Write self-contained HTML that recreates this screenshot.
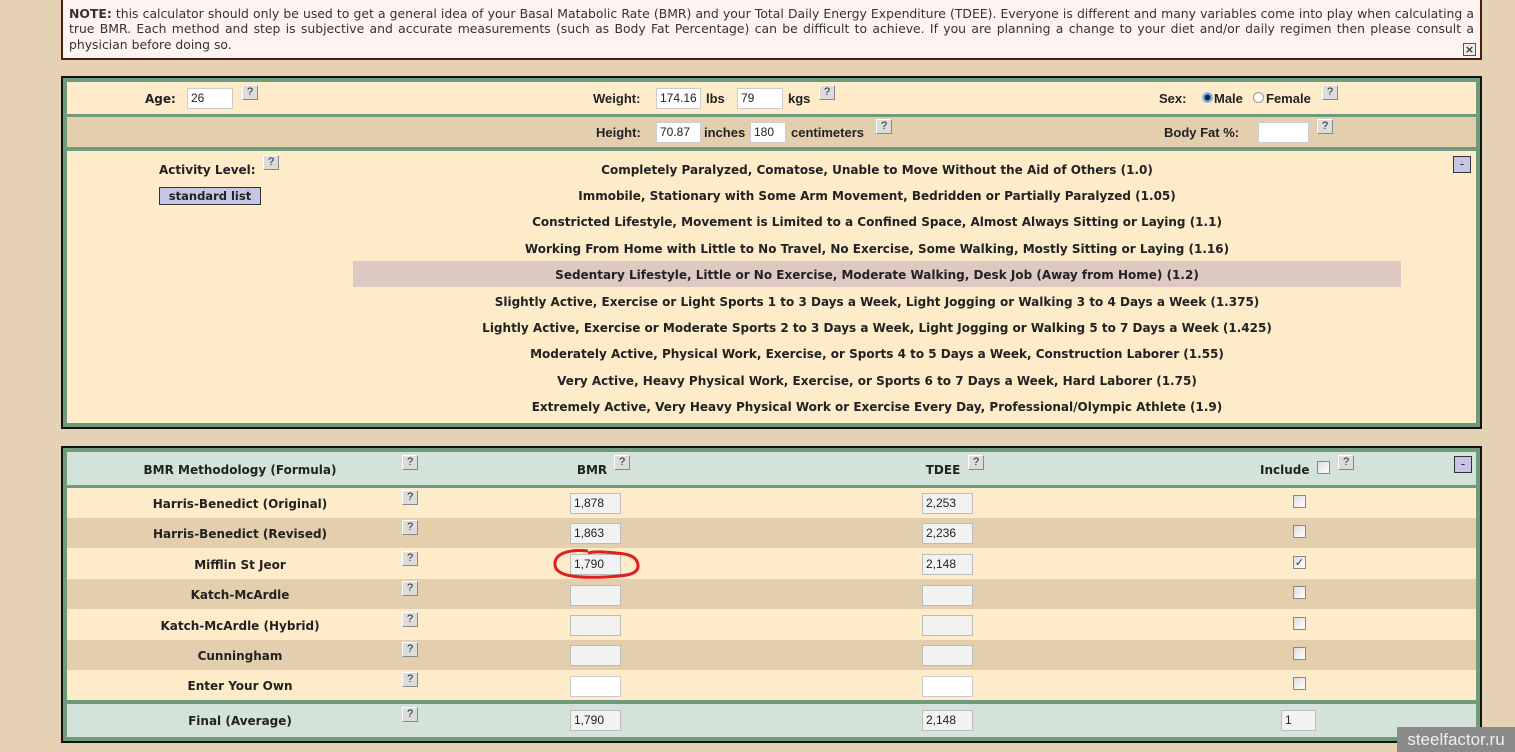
<!DOCTYPE html>
<html><head><meta charset="utf-8"><style>
*{box-sizing:border-box;margin:0;padding:0}
body{width:1515px;height:752px;background:#e5d2b5;position:relative;overflow:hidden;font-family:"DejaVu Sans",Verdana,sans-serif;font-size:12px;color:#222}
.a{position:absolute}
.note{left:61px;top:0;width:1421px;height:60px;border:2px solid #4a1c1c;border-top:none;background:#fdf4f2;padding:6px 6px;font-size:12.4px;line-height:15.3px;text-align:justify;color:#333}
.x{position:absolute;right:4px;bottom:2px;width:13px;height:13px;border:1px solid #555;background:#eee;font-size:11px;line-height:11px;text-align:center;font-weight:bold}
.panel{left:61px;width:1421px;border:2px solid #111;background:#6f9b7c;padding:4px}
.l{background:#fdebca}.d{background:#e3cfae}.g{background:#d3e3da}
b,.b{font-weight:bold}
.q{position:absolute;width:16px;height:15px;background:#dcdcdc;border:1px solid #888;border-top-color:#fff;border-left-color:#fff;font-size:11px;line-height:13px;text-align:center;font-family:"Liberation Sans",sans-serif;color:#222}
.in{position:absolute;height:21px;background:#fff;border:1px solid #ccc;font-family:"Liberation Sans",sans-serif;font-size:12px;line-height:19px;padding-left:3px}
.ro{background:#f2f2f2;border-color:#bbb}
.t{position:absolute;font-weight:bold;white-space:nowrap;font-size:12px}
.c{transform:translateX(-50%)}
.cb{position:absolute;width:13px;height:13px;border:1px solid #888;background:linear-gradient(135deg,#ddd,#fff)}
.act{position:absolute;left:0;width:100%;text-align:center;font-weight:bold;font-size:12px}
.min{position:absolute;width:18px;height:17px;background:#c8c4e6;border:1px solid #333;text-align:center;line-height:14px;font-size:12px}
.lc{font-family:"Liberation Sans",sans-serif;font-weight:bold;font-size:13px}
</style></head><body>
<div class="a note"><b>NOTE:</b> this calculator should only be used to get a general idea of your Basal Matabolic Rate (BMR) and your Total Daily Energy Expenditure (TDEE). Everyone is different and many variables come into play when calculating a true BMR. Each method and step is subjective and accurate measurements (such as Body Fat Percentage) can be difficult to achieve. If you are planning a change to your diet and/or daily regimen then please consult a physician before doing so.<div class="x">×</div></div>

<div class="a panel" style="top:76px;height:353px"></div>
<div class="a" style="left:67px;top:82px;width:1409px;height:32px;background:#fdebca"></div>
<div class="a" style="left:67px;top:117px;width:1409px;height:30px;background:#e3cfae"></div>
<div class="a" style="left:67px;top:151px;width:1409px;height:272px;background:#fdebca"></div>

<div class="t" style="left:145px;top:92px">Age:</div>
<div class="in" style="left:187px;top:88px;width:46px">26</div>
<div class="q" style="left:242px;top:85px">?</div>
<div class="t lc" style="left:593px;top:91px">Weight:</div>
<div class="in" style="left:656px;top:88px;width:45px">174.16</div>
<div class="t lc" style="left:706px;top:91px">lbs</div>
<div class="in" style="left:737px;top:88px;width:46px">79</div>
<div class="t lc" style="left:788px;top:91px">kgs</div>
<div class="q" style="left:819px;top:85px">?</div>
<div class="t lc" style="left:1159px;top:91px">Sex:</div>
<div class="a" style="left:1202px;top:92px;width:11px;height:11px;border-radius:50%;background:radial-gradient(#124 30%,#5a9ae0 40%,#ccc 80%)"></div>
<div class="t lc" style="left:1214px;top:91px">Male</div>
<div class="a" style="left:1253px;top:92px;width:11px;height:11px;border-radius:50%;border:1px solid #999;background:#fff"></div>
<div class="t lc" style="left:1266px;top:91px">Female</div>
<div class="q" style="left:1322px;top:85px">?</div>

<div class="t lc" style="left:596px;top:125px">Height:</div>
<div class="in" style="left:656px;top:122px;width:45px">70.87</div>
<div class="t lc" style="left:704px;top:125px">inches</div>
<div class="in" style="left:750px;top:122px;width:36px">180</div>
<div class="t lc" style="left:791px;top:125px">centimeters</div>
<div class="q" style="left:876px;top:119px">?</div>
<div class="t lc" style="left:1164px;top:125px">Body Fat %:</div>
<div class="in" style="left:1258px;top:122px;width:51px"></div>
<div class="q" style="left:1317px;top:119px">?</div>

<div class="t" style="left:159px;top:163px">Activity Level:</div>
<div class="q" style="left:263px;top:155px">?</div>
<div class="a b" style="left:159px;top:187px;width:102px;height:18px;background:#c8c4e6;border:1px solid #333;text-align:center;font-size:11.5px;line-height:16px">standard list</div>
<div class="min" style="left:1453px;top:156px">-</div>
<div class="a" style="left:353px;top:261px;width:1048px;height:26px;background:#ddc9c1"></div>
<div class="a" style="left:353px;top:163px;width:1048px;height:260px">
<div class="act" style="top:0">Completely Paralyzed, Comatose, Unable to Move Without the Aid of Others (1.0)</div>
<div class="act" style="top:26px">Immobile, Stationary with Some Arm Movement, Bedridden or Partially Paralyzed (1.05)</div>
<div class="act" style="top:52px">Constricted Lifestyle, Movement is Limited to a Confined Space, Almost Always Sitting or Laying (1.1)</div>
<div class="act" style="top:79px">Working From Home with Little to No Travel, No Exercise, Some Walking, Mostly Sitting or Laying (1.16)</div>
<div class="act" style="top:105px">Sedentary Lifestyle, Little or No Exercise, Moderate Walking, Desk Job (Away from Home) (1.2)</div>
<div class="act" style="top:132px">Slightly Active, Exercise or Light Sports 1 to 3 Days a Week, Light Jogging or Walking 3 to 4 Days a Week (1.375)</div>
<div class="act" style="top:158px">Lightly Active, Exercise or Moderate Sports 2 to 3 Days a Week, Light Jogging or Walking 5 to 7 Days a Week (1.425)</div>
<div class="act" style="top:184px">Moderately Active, Physical Work, Exercise, or Sports 4 to 5 Days a Week, Construction Laborer (1.55)</div>
<div class="act" style="top:211px">Very Active, Heavy Physical Work, Exercise, or Sports 6 to 7 Days a Week, Hard Laborer (1.75)</div>
<div class="act" style="top:237px">Extremely Active, Very Heavy Physical Work or Exercise Every Day, Professional/Olympic Athlete (1.9)</div>
</div>

<div class="a panel" style="top:446px;height:297px"></div>
<div class="a g" style="left:67px;top:452px;width:1409px;height:33px"></div>
<div class="a l" style="left:67px;top:488px;width:1409px;height:30px"></div>
<div class="a d" style="left:67px;top:518px;width:1409px;height:30px"></div>
<div class="a l" style="left:67px;top:548px;width:1409px;height:31px"></div>
<div class="a d" style="left:67px;top:579px;width:1409px;height:30px"></div>
<div class="a l" style="left:67px;top:609px;width:1409px;height:31px"></div>
<div class="a d" style="left:67px;top:640px;width:1409px;height:30px"></div>
<div class="a l" style="left:67px;top:670px;width:1409px;height:30px"></div>
<div class="a g" style="left:67px;top:704px;width:1409px;height:33px"></div>

<div class="t c" style="left:240px;top:463px">BMR Methodology (Formula)</div>
<div class="q" style="left:402px;top:455px">?</div>
<div class="t c" style="left:592px;top:463px">BMR</div>
<div class="q" style="left:614px;top:455px">?</div>
<div class="t c" style="left:943px;top:463px">TDEE</div>
<div class="q" style="left:968px;top:455px">?</div>
<div class="t" style="left:1260px;top:463px">Include</div>
<div class="cb" style="left:1317px;top:461px"></div>
<div class="q" style="left:1338px;top:455px">?</div>
<div class="min" style="left:1454px;top:456px">-</div>

<div class="t c" style="left:240px;top:497px">Harris-Benedict (Original)</div>
<div class="t c" style="left:240px;top:527px">Harris-Benedict (Revised)</div>
<div class="t c" style="left:240px;top:558px">Mifflin St Jeor</div>
<div class="t c" style="left:240px;top:588px">Katch-McArdle</div>
<div class="t c" style="left:240px;top:619px">Katch-McArdle (Hybrid)</div>
<div class="t c" style="left:240px;top:649px">Cunningham</div>
<div class="t c" style="left:240px;top:679px">Enter Your Own</div>
<div class="t c" style="left:240px;top:714px">Final (Average)</div>

<div class="q" style="left:402px;top:490px">?</div>
<div class="q" style="left:402px;top:520px">?</div>
<div class="q" style="left:402px;top:551px">?</div>
<div class="q" style="left:402px;top:581px">?</div>
<div class="q" style="left:402px;top:612px">?</div>
<div class="q" style="left:402px;top:642px">?</div>
<div class="q" style="left:402px;top:672px">?</div>
<div class="q" style="left:402px;top:707px">?</div>

<div class="in ro" style="left:570px;top:493px;width:51px">1,878</div>
<div class="in ro" style="left:570px;top:523px;width:51px">1,863</div>
<div class="in ro" style="left:570px;top:554px;width:51px">1,790</div>
<div class="in ro" style="left:570px;top:585px;width:51px"></div>
<div class="in ro" style="left:570px;top:615px;width:51px"></div>
<div class="in ro" style="left:570px;top:645px;width:51px"></div>
<div class="in" style="left:570px;top:676px;width:51px"></div>
<div class="in ro" style="left:570px;top:710px;width:51px">1,790</div>

<div class="in ro" style="left:922px;top:493px;width:51px">2,253</div>
<div class="in ro" style="left:922px;top:523px;width:51px">2,236</div>
<div class="in ro" style="left:922px;top:554px;width:51px">2,148</div>
<div class="in ro" style="left:922px;top:585px;width:51px"></div>
<div class="in ro" style="left:922px;top:615px;width:51px"></div>
<div class="in ro" style="left:922px;top:645px;width:51px"></div>
<div class="in" style="left:922px;top:676px;width:51px"></div>
<div class="in ro" style="left:922px;top:710px;width:51px">2,148</div>

<div class="cb" style="left:1293px;top:495px"></div>
<div class="cb" style="left:1293px;top:525px"></div>
<div class="cb" style="left:1293px;top:556px;font-size:11px;line-height:11px;text-align:center;color:#335">✓</div>
<div class="cb" style="left:1293px;top:586px"></div>
<div class="cb" style="left:1293px;top:617px"></div>
<div class="cb" style="left:1293px;top:647px"></div>
<div class="cb" style="left:1293px;top:677px"></div>
<div class="in ro" style="left:1281px;top:710px;width:35px">1</div>

<svg class="a" style="left:550px;top:545px" width="95" height="40"><path d="M38 6 C20 4 4 8 5 20 C6 32 30 33 55 32 C75 31 89 30 88 20 C87 12 80 9 66 8 C55 7 44 6 38 8" fill="none" stroke="#e02020" stroke-width="3"/></svg>

<div class="a" style="left:1397px;top:727px;width:118px;height:25px;background:#8a8a8a;color:#eee;font-family:'Liberation Sans',sans-serif;font-size:17px;line-height:25px;text-align:center">steelfactor.ru</div>
</body></html>
